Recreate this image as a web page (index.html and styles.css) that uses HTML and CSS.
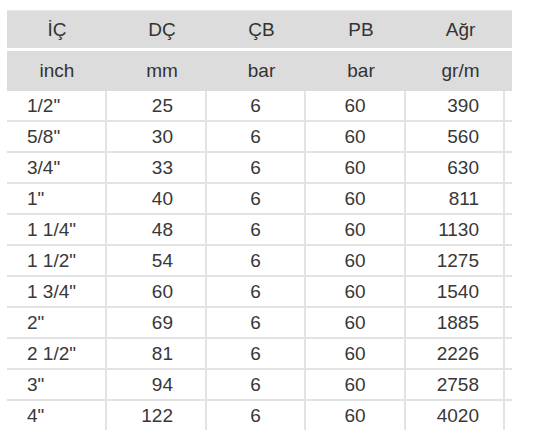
FILE: index.html
```html
<!DOCTYPE html>
<html lang="tr">
<head>
<meta charset="utf-8">
<link rel="stylesheet" href="styles.css">
</head>
<body>
<table class="spec">
  <colgroup>
    <col class="c1"><col class="c2"><col class="c3"><col class="c4"><col class="c5"><col class="c6">
  </colgroup>
  <thead>
    <tr class="h1">
      <th class="first">İÇ</th><th>DÇ</th><th>ÇB</th><th>PB</th><th>Ağr</th><th class="pad"></th>
    </tr>
    <tr class="h2">
      <th class="first">inch</th><th>mm</th><th>bar</th><th>bar</th><th>gr/m</th><th class="pad"></th>
    </tr>
  </thead>
  <tbody>
    <tr><td class="l">1/2"</td><td class="r2">25</td><td class="c">6</td><td class="c">60</td><td class="r5">390</td><td class="pad"></td></tr>
    <tr><td class="l">5/8"</td><td class="r2">30</td><td class="c">6</td><td class="c">60</td><td class="r5">560</td><td class="pad"></td></tr>
    <tr><td class="l">3/4"</td><td class="r2">33</td><td class="c">6</td><td class="c">60</td><td class="r5">630</td><td class="pad"></td></tr>
    <tr><td class="l">1"</td><td class="r2">40</td><td class="c">6</td><td class="c">60</td><td class="r5">811</td><td class="pad"></td></tr>
    <tr><td class="l">1 1/4"</td><td class="r2">48</td><td class="c">6</td><td class="c">60</td><td class="r5">1130</td><td class="pad"></td></tr>
    <tr><td class="l">1 1/2"</td><td class="r2">54</td><td class="c">6</td><td class="c">60</td><td class="r5">1275</td><td class="pad"></td></tr>
    <tr><td class="l">1 3/4"</td><td class="r2">60</td><td class="c">6</td><td class="c">60</td><td class="r5">1540</td><td class="pad"></td></tr>
    <tr><td class="l">2"</td><td class="r2">69</td><td class="c">6</td><td class="c">60</td><td class="r5">1885</td><td class="pad"></td></tr>
    <tr><td class="l">2 1/2"</td><td class="r2">81</td><td class="c">6</td><td class="c">60</td><td class="r5">2226</td><td class="pad"></td></tr>
    <tr><td class="l">3"</td><td class="r2">94</td><td class="c">6</td><td class="c">60</td><td class="r5">2758</td><td class="pad"></td></tr>
    <tr class="last"><td class="l">4"</td><td class="r2">122</td><td class="c">6</td><td class="c">60</td><td class="r5">4020</td><td class="pad"></td></tr>
  </tbody>
</table>
</body>
</html>
```

FILE: styles.css
```css
html, body {
  margin: 0;
  padding: 0;
  background: #ffffff;
}

body {
  padding: 10px 0 0 7px;
  font-family: "Liberation Sans", Arial, Helvetica, sans-serif;
  font-size: 19px;
  color: #383838;
}

.spec {
  border-collapse: separate;
  border-spacing: 0;
  table-layout: fixed;
  width: 505px;
}

.c1 { width: 100px; }
.c2 { width: 100px; }
.c3 { width: 99px; }
.c4 { width: 100px; }
.c5 { width: 99px; }
.c6 { width: 7px; }

.spec th {
  background: #dcdcdc;
  font-weight: normal;
  text-align: center;
  padding: 0 0 0 10px;
  color: #333333;
}

.spec th.first {
  padding-left: 0;
}

.spec th.pad {
  padding: 0;
}

.h1 th {
  height: 36px;
  border-top: 1px solid #e6e6e6;
  border-bottom: 3px solid #ffffff;
  padding-top: 1px;
}

.h2 th {
  height: 40px;
}

.spec td {
  height: 29px;
  padding: 0;
  border-bottom: 2px solid #e3e3e3;
  border-right: 2px solid #e3e3e3;
}

.spec td.pad {
  border-right: none;
}

.spec tr.last td {
  border-bottom: none;
}

.l {
  text-align: left;
  padding-left: 20px !important;
}

.r2 {
  text-align: right;
  padding-right: 32px !important;
}

.c {
  text-align: center;
}

.r5 {
  text-align: right;
  padding-right: 24px !important;
}
```
